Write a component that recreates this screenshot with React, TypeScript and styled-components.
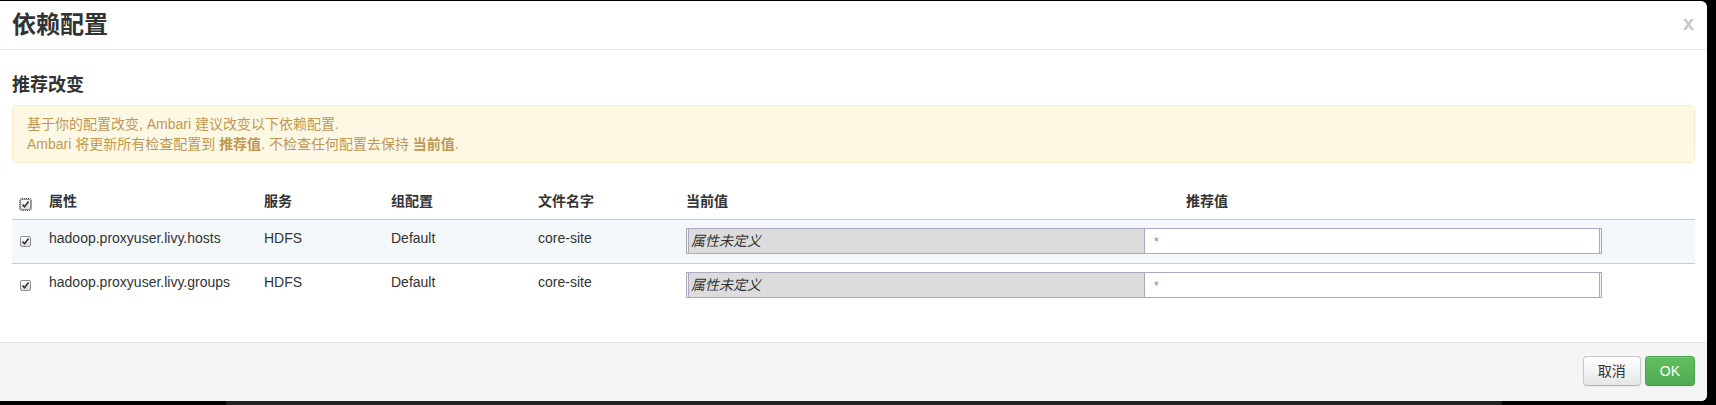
import React from 'react';
import styled, { createGlobalStyle } from 'styled-components';

const GlobalStyle = createGlobalStyle`
  html, body {
    margin: 0;
    padding: 0;
    background: #000;
  }
  body {
    font-family: "Liberation Sans", "Noto Sans CJK SC", Arial, sans-serif;
    font-size: 14px;
    line-height: 20px;
    color: #333;
  }
  * {
    box-sizing: border-box;
  }
`;

const Screen = styled.div`
  width: 1716px;
  height: 405px;
  padding-top: 1px;
  display: flex;
  flex-direction: column;
  overflow: hidden;
`;

const Modal = styled.div`
  width: 1707px;
  height: 400px;
  background: #fff;
  border-radius: 0 6px 6px 0;
  display: flex;
  flex-direction: column;
  overflow: hidden;
`;

const Header = styled.div`
  height: 49px;
  padding: 0 13px 0 12px;
  border-bottom: 1px solid #e5e5e5;
  display: flex;
  align-items: center;
  justify-content: space-between;
`;

const Title = styled.h3`
  margin: 0;
  font-size: 24px;
  line-height: 26px;
  font-weight: bold;
  color: #333;
`;

const Close = styled.span`
  font-size: 20px;
  line-height: 20px;
  font-weight: bold;
  color: #c8c8c8;
  margin-top: -4px;
`;

const Body = styled.div`
  flex: 1;
  padding: 15px 12px 0;
`;

const SectionTitle = styled.h4`
  margin: 10px 0;
  font-size: 18px;
  line-height: 20px;
  font-weight: bold;
  color: #333;
`;

const Alert = styled.div`
  padding: 8px 14px;
  margin-bottom: 20px;
  background: #fcf8e3;
  border: 1px solid #faebcc;
  border-radius: 4px;
  color: #c09853;

  strong {
    font-weight: bold;
  }
`;

const cols = '29px 215px 127px 147px 148px 500px 1fr';

const HeadRow = styled.div`
  display: grid;
  grid-template-columns: ${cols};
  border-bottom: 1px solid #c6ccd8;
`;

const Row = styled.div<{ $highlight?: boolean }>`
  display: grid;
  grid-template-columns: ${cols};
  background: ${(p) => (p.$highlight ? '#f5f8fb' : 'transparent')};
  border-bottom: ${(p) => (p.$highlight ? '1px solid #c6ccd8' : '1px solid transparent')};
`;

const Th = styled.div`
  padding: 8px;
  font-weight: bold;
  color: #333;
  white-space: nowrap;
`;

const Td = styled.div<{ $span?: number }>`
  padding: 8px 8px 9px;
  color: #333;
  white-space: nowrap;
  grid-column: ${(p) => (p.$span ? `span ${p.$span}` : 'auto')};
`;

const CheckCell = styled.div`
  padding: 8px 0 8px 8px;
`;

const Box = styled.span<{ $focused?: boolean }>`
  display: block;
  width: 11px;
  height: 11px;
  margin-top: 8px;
  border: 1px solid #8e8f94;
  border-radius: 2px;
  background: linear-gradient(#fdfdfd, #dcdcdc);
  outline: ${(p) => (p.$focused ? '1px dotted #444' : 'none')};
  outline-offset: 0;
  position: relative;

  svg {
    position: absolute;
    left: 0;
    top: 0;
  }
`;

const InputGroup = styled.div`
  display: flex;
`;

const CurrentInput = styled.div`
  width: 459px;
  height: 26px;
  padding-left: 4px;
  background: #dcdcdc;
  border: 1px solid #aba9bf;
  box-shadow: inset 1px 0 0 #f4f4f4, inset 2px 0 0 #aba9bf;
  font-style: italic;
  font-size: 14px;
  line-height: 25px;
  color: #333;
`;

const RecommendInput = styled.div`
  width: 457px;
  height: 26px;
  padding-left: 9px;
  background: #fff;
  border: 1px solid #aba9bf;
  border-left: none;
  box-shadow: inset -1px 0 0 #f4f4f4, inset -2px 0 0 #aba9bf;
  font-size: 12px;
  line-height: 26px;
  color: #8a8a8a;
`;

const Footer = styled.div`
  height: 59px;
  padding: 13px 12px 0;
  background: #f5f5f5;
  border-top: 1px solid #e5e5e5;
  display: flex;
  justify-content: flex-end;
  gap: 4px;
`;

const Button = styled.button<{ $primary?: boolean }>`
  height: 30px;
  padding: 4px 14px;
  font-family: inherit;
  font-size: 14px;
  line-height: 20px;
  border-radius: 4px;
  cursor: pointer;
  color: ${(p) => (p.$primary ? '#fff' : '#333')};
  background: ${(p) =>
    p.$primary ? 'linear-gradient(#5fbf5f, #52ab52)' : 'linear-gradient(#ffffff, #e6e6e6)'};
  border: 1px solid ${(p) => (p.$primary ? '#4ea44e' : '#c8c8c8')};
  border-bottom-color: ${(p) => (p.$primary ? '#469346' : '#b3b3b3')};
  box-shadow: inset 0 1px 0 rgba(255, 255, 255, 0.2), 0 1px 2px rgba(0, 0, 0, 0.05);
`;

const Strip = styled.div`
  height: 4px;
  display: flex;
`;

const StripBar = styled.div`
  margin-left: 226px;
  width: 1276px;
  background: #222;
`;

const Check: React.FC<{ focused?: boolean }> = ({ focused }) => (
  <Box $focused={focused}>
    <svg width="9" height="9" viewBox="0 0 9 9">
      <path d="M1.6 4.6 L3.6 6.8 L7.6 1.6" fill="none" stroke="#333" strokeWidth="1.6" />
    </svg>
  </Box>
);

const rows = [
  { name: 'hadoop.proxyuser.livy.hosts', service: 'HDFS', group: 'Default', file: 'core-site' },
  { name: 'hadoop.proxyuser.livy.groups', service: 'HDFS', group: 'Default', file: 'core-site' },
];

export default function App() {
  return (
    <>
      <GlobalStyle />
      <Screen>
        <Modal>
          <Header>
            <Title>依赖配置</Title>
            <Close>x</Close>
          </Header>
          <Body>
            <SectionTitle>推荐改变</SectionTitle>
            <Alert>
              <div>基于你的配置改变, Ambari 建议改变以下依赖配置.</div>
              <div>
                Ambari 将更新所有检查配置到 <strong>推荐值</strong>. 不检查任何配置去保持 <strong>当前值</strong>.
              </div>
            </Alert>
            <HeadRow>
              <CheckCell>
                <Check focused />
              </CheckCell>
              <Th>属性</Th>
              <Th>服务</Th>
              <Th>组配置</Th>
              <Th>文件名字</Th>
              <Th>当前值</Th>
              <Th>推荐值</Th>
            </HeadRow>
            {rows.map((r, i) => (
              <Row key={r.name} $highlight={i === 0}>
                <CheckCell>
                  <Check />
                </CheckCell>
                <Td>{r.name}</Td>
                <Td>{r.service}</Td>
                <Td>{r.group}</Td>
                <Td>{r.file}</Td>
                <Td $span={2}>
                  <InputGroup>
                    <CurrentInput>属性未定义</CurrentInput>
                    <RecommendInput>*</RecommendInput>
                  </InputGroup>
                </Td>
              </Row>
            ))}
          </Body>
          <Footer>
            <Button>取消</Button>
            <Button $primary>OK</Button>
          </Footer>
        </Modal>
        <Strip>
          <StripBar />
        </Strip>
      </Screen>
    </>
  );
}
